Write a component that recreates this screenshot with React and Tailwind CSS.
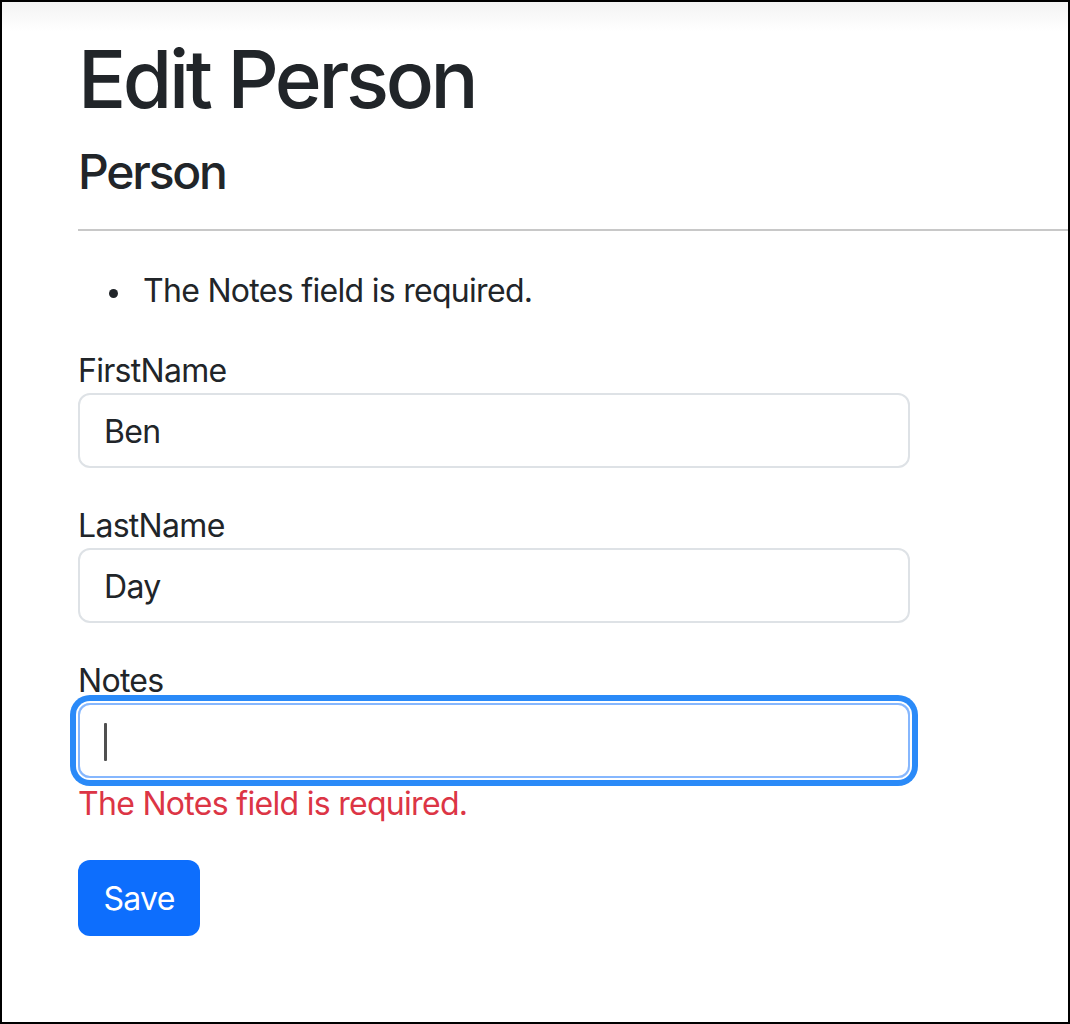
export default function App() {
  const font = { fontFamily: 'Inter, "Noto Sans", "Liberation Sans", sans-serif' };
  return (
    <div
      className="w-[1070px] h-[1024px] border-2 border-black box-border bg-white overflow-hidden text-[#212529]"
      style={font}
    >
      <div className="h-[29px] bg-gradient-to-b from-[#f3f3f3] to-white" />
      <div className="pl-[76px]">
        <h1 className="text-[80px] leading-[96px] font-medium mb-[16px] tracking-[-3.4px]">Edit Person</h1>
        <h4 className="text-[48px] leading-[58px] font-medium tracking-[-2.2px]">Person</h4>
        <div className="mt-[28px] h-[2px] bg-[#c8c8c8]" />
        <ul className="mt-[34px] pl-[31px] text-[32px] leading-[44px] pt-[4px] mb-[32px] tracking-[-0.7px]">
          <li className="flex items-center">
            <span className="w-[9px] h-[9px] rounded-full bg-[#212529] mr-[25px] mt-[4px] shrink-0" />
            <span>The Notes field is required.</span>
          </li>
        </ul>
        <div className="w-[832px] text-[32px] leading-[48px] tracking-[-0.7px]">
          <div className="mb-[32px]">
            <div className="leading-[44px] pt-[4px]">FirstName</div>
            <div className="h-[75px] border-2 border-[#dee2e6] rounded-[12px] px-[24px] pt-[2px] flex items-center">Ben</div>
          </div>
          <div className="mb-[32px]">
            <div className="leading-[44px] pt-[4px]">LastName</div>
            <div className="h-[75px] border-2 border-[#dee2e6] rounded-[12px] px-[24px] pt-[2px] flex items-center">Day</div>
          </div>
          <div className="mb-[32px]">
            <div className="leading-[44px] pt-[4px]">Notes</div>
            <div className="h-[75px] border-2 border-[#86b7fe] rounded-[12px] px-[24px] pt-[2px] flex items-center shadow-[0_0_0_2px_#ffffff,0_0_0_8px_#2a8af8]">
              <span className="block w-[3px] h-[38px] bg-[#505050] rounded-[1px]" />
            </div>
            <div className="text-[#dc3545] leading-[44px] pt-[4px]">The Notes field is required.</div>
          </div>
          <button className="mt-[2px] h-[76px] w-[122px] pt-[2px] rounded-[12px] bg-[#0d6efd] text-white text-[32px] leading-[48px] tracking-[-0.7px]">
            Save
          </button>
        </div>
      </div>
    </div>
  );
}
